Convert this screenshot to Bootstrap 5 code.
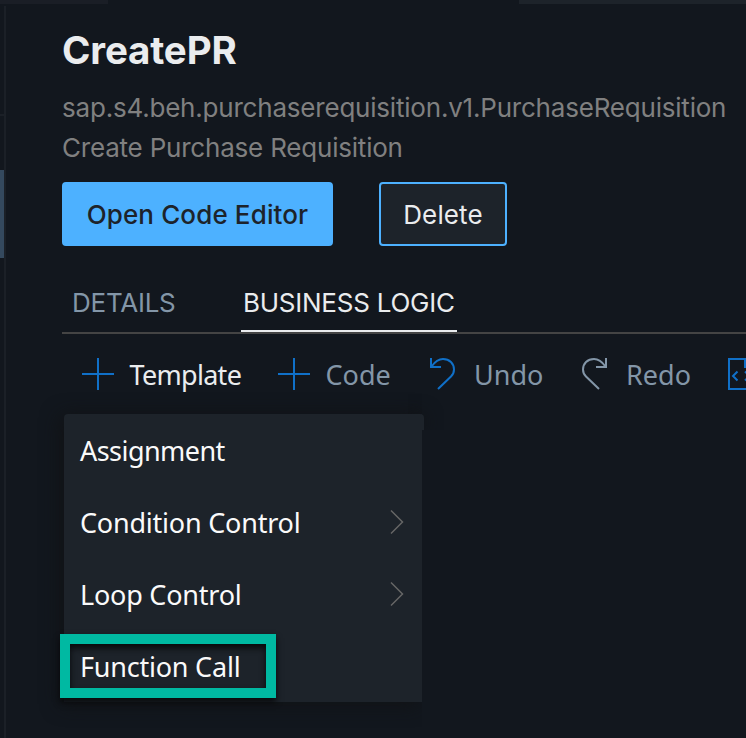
<!DOCTYPE html>
<html lang="en">
<head>
<meta charset="utf-8">
<title>CreatePR</title>
<link href="https://cdn.jsdelivr.net/npm/bootstrap@5.3.0/dist/css/bootstrap.min.css" rel="stylesheet">
<style>
body{background:#12171e;width:746px;height:738px;overflow:hidden;font-family:Inter,"Liberation Sans",sans-serif;color:#eaecee}
.topstrip{height:4px;background:linear-gradient(90deg,#1a1e26 108px,transparent 108px 519px,#1d232a 519px)}
.main-area{height:734px}
.rail{width:6px;height:732px;margin-top:2px;border-right:2px solid #1b2027}
.rail-line{height:2px;margin-top:108px;background:#1b2027}
.rail-sel{height:88px;margin-top:54px;background:#34495e}
.page{padding:22px 0 0 56px;width:740px}
.title{font-size:38.5px;line-height:48px;font-weight:700;letter-spacing:-.15px;margin-bottom:14px}
.sub{font-size:26px;line-height:40px;letter-spacing:-.205px;color:#808080;white-space:nowrap}
.actions{margin-top:14px;gap:46px}
.act{height:64px;border-radius:4px;font-size:26px;line-height:1;padding:2px 0 0;border:2px solid #4db1ff;letter-spacing:.13px;white-space:nowrap}
.act-main{width:271px;background:#4db1ff;color:#1d232a;font-weight:500}
.act-del{width:128px;background:#1d232a;color:#eaecee}
.tabsx{height:88px;border-bottom:2px solid #444;padding-left:10px}
.tabx{width:103px;font-size:26px;line-height:40px;padding-top:37px;height:86px;color:#8396a8;letter-spacing:-.25px;white-space:nowrap}
.tabx.on{margin-left:66px;width:216px;padding-left:2px;color:#eaecee;border-bottom:2px solid #eaecee}
.tools{height:80px;padding-left:20px;font-family:"Noto Sans","Open Sans",sans-serif;font-size:27px;color:#8396a8}
.tool{height:80px;width:152px;flex:none}
.tool span{line-height:80px;padding-top:2px;margin-left:15.500px}
.tool-template{width:196px;color:#eaecee;letter-spacing:-.7px}
.tool-turn span{margin-left:18px}
.tool-redo{width:146px}
.tool svg,.entry svg{display:block;flex:none;fill:none}
.menu-box{position:absolute;left:64px;top:414px;width:358px;height:288px;background:#1d232a;border-radius:4px 0 0 0;box-shadow:-3px 2px 20px #111214;clip-path:inset(-30px 0 -30px -30px);font-family:"Noto Sans","Open Sans",sans-serif;font-size:27px;letter-spacing:-.22px;color:#fafafa}
.menu-lip{position:absolute;left:408px;top:414px;width:16px;height:16px;background:#1d232a;border-radius:0 4px 0 0;box-shadow:0 0 18px #111316;clip-path:inset(-20px -20px 0 0)}
.entry{height:72px;padding:0 18px 0 16px}
.entry span{padding-top:2px}
.tight{letter-spacing:-.55px}
.marker{position:absolute;left:60px;top:634px;width:216px;height:64px;border:10px solid #00b9a2;box-shadow:0 4px 6px #08090b,inset 0 4px 6px #08090b}
</style>
</head>
<body>
<div class="topstrip"></div>
<div class="main-area d-flex">
<div class="rail flex-shrink-0"><div class="rail-line"></div><div class="rail-sel"></div></div>
<main class="page flex-shrink-0">
<h1 class="title">CreatePR</h1>
<div class="sub">sap.s4.beh.purchaserequisition.v1.PurchaseRequisition</div>
<div class="sub">Create Purchase Requisition</div>
<div class="actions d-flex">
<button class="btn act act-main">Open Code Editor</button>
<button class="btn act act-del">Delete</button>
</div>
<div class="tabsx d-flex"><div class="tabx">DETAILS</div><div class="tabx on">BUSINESS LOGIC</div></div>
<div class="tools d-flex">
<div class="tool tool-template d-flex align-items-center"><svg width="32" height="32" stroke="#1070c8" stroke-width="2"><path d="M0 16H32M16 0V32"/></svg><span>Template</span></div>
<div class="tool d-flex align-items-center"><svg width="32" height="32" stroke="#1070c8" stroke-width="2"><path d="M0 16H32M16 0V32"/></svg><span>Code</span></div>
<div class="tool tool-turn d-flex align-items-center"><svg width="26" height="32" stroke="#1070c8" stroke-width="2"><path d="M1 0V9H11M1.500 8.500C4 5 7 1 13 1C19.500 1 24 5.500 24 11.500C24 14.500 23 16.500 21 18.500L8 31"/></svg><span>Undo</span></div>
<div class="tool tool-turn tool-redo d-flex align-items-center"><svg width="26" height="32" stroke="#8396a8" stroke-width="2"><path d="M24 0V9H14M23.500 8.500C21 5 18 1 12 1C5.500 1 1 5.500 1 11.500C1 14.500 2 16.500 4 18.500L17 31"/></svg><span>Redo</span></div>
<div class="tool d-flex align-items-center"><svg width="32" height="32" stroke="#1070c8" stroke-width="2"><path d="M17 1H1V31H31V14M17 0V9H26M17 1L30 14M9.500 13.500L5 18L9.500 22.500M17 13.500L21.500 18L17 22.500"/></svg></div>
</div>
</main>
</div>
<div class="menu-box">
<div class="entry d-flex align-items-center"><span class="tight">Assignment</span></div>
<div class="entry d-flex align-items-center justify-content-between"><span>Condition Control</span><svg width="14" height="26" stroke="#666" stroke-width="1.5"><path d="M1 1.500L12.500 13L1 24.500"/></svg></div>
<div class="entry d-flex align-items-center justify-content-between"><span>Loop Control</span><svg width="14" height="26" stroke="#666" stroke-width="1.5"><path d="M1 1.500L12.500 13L1 24.500"/></svg></div>
<div class="entry d-flex align-items-center"><span>Function Call</span></div>
</div>
<div class="menu-lip"></div>
<div class="marker"></div>
<script src="https://cdn.jsdelivr.net/npm/bootstrap@5.3.0/dist/js/bootstrap.bundle.min.js"></script>
</body>
</html>
